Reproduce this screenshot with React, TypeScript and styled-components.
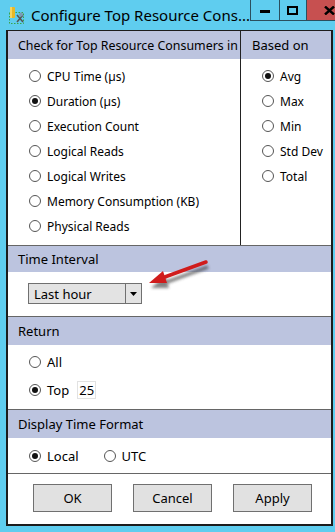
import styled, { createGlobalStyle } from "styled-components";

const GlobalStyle = createGlobalStyle`
  html, body {
    margin: 0;
    padding: 0;
    background: #5fcdef;
  }
  body {
    font-family: "Noto Sans", "Open Sans", sans-serif;
    color: #000;
  }
`;

const metrics = ["CPU Time (µs)", "Duration (µs)", "Execution Count", "Logical Reads", "Logical Writes", "Memory Consumption (KB)", "Physical Reads"];
const basedOn = ["Avg", "Max", "Min", "Std Dev", "Total"];

type RadioProps = {
  label: string;
  checked?: boolean;
}

function Radio(props: RadioProps) {
  const { label, checked } = props;
  return (
    <RadioRow>
      <Circle $checked={!!checked} />
      <span>{label}</span>
    </RadioRow>
  )
}

function TitleIcon() {
  return (
    <svg width="16" height="17" viewBox="0 0 16 17">
      <rect x="0.5" y="5.5" width="14" height="11" fill="none" stroke="#3aa34a" strokeDasharray="1.5 1.5" />
      <rect x="1" y="0" width="5" height="11" rx="1" fill="#e8b828" />
      <rect x="1" y="0" width="2" height="11" fill="#f7d560" />
      <path d="M8 8 L14 15 M14 8 L8 15" stroke="#555" strokeWidth="1.6" />
      <circle cx="12" cy="7.5" r="2" fill="#7a9ab5" />
    </svg>
  )
}

function App() {
  return (
    <Window>
      <GlobalStyle />
      <TitleBar>
        <TitleIconBox><TitleIcon /></TitleIconBox>
        <Title>Configure Top Resource Cons...</Title>
        <Controls>
          <CtrlButton $width={28}><MinGlyph /></CtrlButton>
          <CtrlButton $width={26}><MaxGlyph /></CtrlButton>
          <CloseButton>
            <svg width="11" height="9" viewBox="0 0 11 9">
              <path d="M1 0.5 L10 8.5 M10 0.5 L1 8.5" stroke="#000" strokeWidth="2.4" />
            </svg>
          </CloseButton>
        </Controls>
      </TitleBar>

      <Panel>
        <TopSection>
          <LeftColumn>
            <Header $size={12.4}>Check for Top Resource Consumers in</Header>
            <RadioList>
              {metrics.map(m => (
                <Radio key={m} label={m} checked={m === "Duration (µs)"} />
              ))}
            </RadioList>
          </LeftColumn>
          <RightColumn>
            <Header $pad={11}>Based on</Header>
            <RadioList>
              {basedOn.map(b => (
                <Radio key={b} label={b} checked={b === "Avg"} />
              ))}
            </RadioList>
          </RightColumn>
        </TopSection>

        <Section>
          <Header $height={26}>Time Interval</Header>
          <IntervalBody>
            <Combo>
              <ComboText>Last hour</ComboText>
              <ComboButton>
                <svg width="7" height="4" viewBox="0 0 7 4"><path d="M0 0 H7 L3.5 4 Z" fill="#000" /></svg>
              </ComboButton>
            </Combo>
            <Arrow width="70" height="32" viewBox="0 0 70 32">
              <defs>
                <filter id="sh" x="-20%" y="-40%" width="140%" height="200%">
                  <feGaussianBlur stdDeviation="1.8" />
                </filter>
              </defs>
              <g transform="translate(2,5)" filter="url(#sh)" opacity="0.6">
                <path d="M58 3 L14 19" stroke="#333" strokeWidth="3.5" />
                <path d="M1 24 L15 12 L19 24 Z" fill="#333" />
              </g>
              <path d="M58 3 L14 19" stroke="#d01c1c" strokeWidth="3.5" strokeLinecap="round" />
              <path d="M1 24 L15 12 L19 24 Z" fill="#d01c1c" />
            </Arrow>
          </IntervalBody>
        </Section>

        <Section>
          <Header>Return</Header>
          <ReturnBody>
            <Radio label="All" />
            <TopRow>
              <Radio label="Top" checked />
              <CountBox>25</CountBox>
            </TopRow>
          </ReturnBody>
        </Section>

        <Section>
          <Header>Display Time Format</Header>
          <FormatBody>
            <Radio label="Local" checked />
            <Radio label="UTC" />
          </FormatBody>
        </Section>

        <Footer>
          <DialogButton>OK</DialogButton>
          <DialogButton>Cancel</DialogButton>
          <DialogButton>Apply</DialogButton>
        </Footer>
      </Panel>
    </Window>
  )
}

export default App

const Window = styled.div`
  width: 335px;
  height: 532px;
  background: #5fcdef;
  display: flex;
  flex-direction: column;
  overflow: hidden;
`;

const TitleBar = styled.div`
  height: 30px;
  display: flex;
  align-items: flex-start;
  flex-shrink: 0;
`;

const TitleIconBox = styled.div`
  margin: 7px 0 0 9px;
  width: 17px;
  height: 17px;
`;

const Title = styled.div`
  margin: 5px 0 0 6px;
  font-size: 15px;
  line-height: 20px;
  flex-grow: 1;
  white-space: nowrap;
`;

const Controls = styled.div`
  display: flex;
  height: 21px;
  border-left: 1px solid #2b4f5e;
  border-bottom: 1px solid #2b4f5e;
  box-sizing: border-box;
`;

const CtrlButton = styled.div<{ $width: number }>`
  width: ${p => p.$width}px;
  display: flex;
  align-items: center;
  justify-content: center;
  border-right: 1px solid #2b4f5e;
`;

const MinGlyph = styled.div`
  width: 10px;
  height: 3px;
  background: #000;
  margin-top: 2px;
`;

const MaxGlyph = styled.div`
  width: 7px;
  height: 5px;
  border: 2px solid #000;
`;

const CloseButton = styled.div`
  width: 45px;
  background: #c75050;
  display: flex;
  align-items: center;
  justify-content: center;
`;

const Panel = styled.div`
  flex-grow: 1;
  margin: 0 2px 6px 6px;
  background: #fff;
  border: 2px solid #1c1c1c;
  border-top: 1px solid #1c1c1c;
  display: flex;
  flex-direction: column;
  font-size: 12px;
`;

const Header = styled.div<{ $pad?: number; $height?: number; $size?: number }>`
  height: ${p => p.$height ?? 28}px;
  background: #bcc4df;
  display: flex;
  align-items: center;
  padding-left: ${p => p.$pad ?? 10}px;
  font-size: ${p => p.$size ?? 13}px;
  white-space: nowrap;
  overflow: hidden;
`;

const TopSection = styled.div`
  display: grid;
  grid-template-columns: 233px 1fr;
  height: 214px;
  border-bottom: 1px solid #666;
`;

const LeftColumn = styled.div`
  border-right: 1px solid #222;
`;

const RightColumn = styled.div``;

const RadioList = styled.div`
  display: flex;
  flex-direction: column;
  gap: 9px;
  padding: 9px 0 0 21px;
`;

const RadioRow = styled.div`
  display: flex;
  align-items: center;
  height: 16px;
  gap: 6px;
  white-space: nowrap;
`;

const Circle = styled.div<{ $checked: boolean }>`
  width: 12px;
  height: 12px;
  box-sizing: border-box;
  border-radius: 50%;
  border: 1px solid #555;
  background: #fff;
  display: flex;
  align-items: center;
  justify-content: center;

  &::after {
    content: "";
    width: 6px;
    height: 6px;
    border-radius: 50%;
    background: ${p => p.$checked ? "#111" : "transparent"};
  }
`;

const Section = styled.div`
  border-bottom: 1px solid #666;
`;

const IntervalBody = styled.div`
  height: 44px;
  display: flex;
  align-items: flex-start;
  padding: 11px 0 0 20px;
  box-sizing: border-box;
  position: relative;
`;

const Combo = styled.div`
  width: 114px;
  height: 21px;
  box-sizing: border-box;
  border: 1px solid #707070;
  background: #e3e3e3;
  display: flex;
`;

const ComboText = styled.div`
  flex-grow: 1;
  padding-left: 5px;
  display: flex;
  align-items: center;
  font-size: 13px;
`;

const ComboButton = styled.div`
  width: 15px;
  border-left: 1px solid #707070;
  display: flex;
  align-items: center;
  justify-content: center;
`;

const Arrow = styled.svg`
  position: absolute;
  left: 140px;
  top: -13px;
  overflow: visible;
`;

const ReturnBody = styled.div`
  height: 64px;
  box-sizing: border-box;
  padding: 9px 0 0 21px;
  display: flex;
  flex-direction: column;
  gap: 11px;
  font-size: 13px;
`;

const TopRow = styled.div`
  display: flex;
  align-items: center;
  gap: 8px;
`;

const CountBox = styled.div`
  width: 19px;
  height: 18px;
  box-sizing: border-box;
  border: 1px solid #e2e2e2;
  display: flex;
  align-items: center;
  justify-content: center;
  font-size: 13px;
`;

const FormatBody = styled.div`
  height: 35px;
  box-sizing: border-box;
  padding: 0 0 0 21px;
  display: flex;
  align-items: center;
  gap: 25px;
  font-size: 13px;
`;

const Footer = styled.div`
  flex-grow: 1;
  display: flex;
  align-items: flex-start;
  padding: 10px 0 0 25px;
  gap: 21px;
`;

const DialogButton = styled.div`
  width: 79px;
  height: 28px;
  box-sizing: border-box;
  border: 1px solid #707070;
  background: #e1e1e1;
  display: flex;
  align-items: center;
  justify-content: center;
  font-size: 13px;
`;
